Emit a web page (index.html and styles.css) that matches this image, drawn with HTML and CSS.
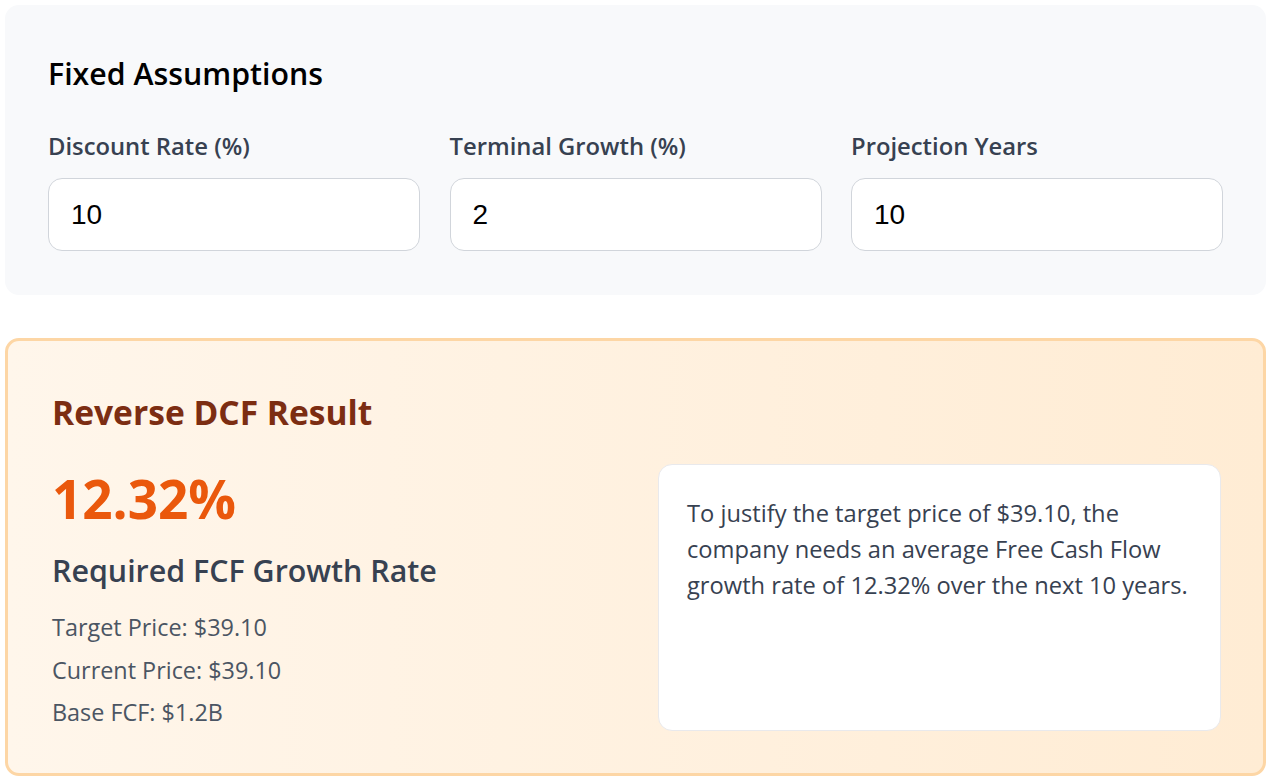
FILE: index.html
```html
<!DOCTYPE html>
<html lang="en">
<head>
<meta charset="utf-8">
<title>Reverse DCF</title>
<link rel="stylesheet" href="styles.css">
</head>
<body>
<div class="page">
  <section class="card assumptions">
    <h2 class="card-title">Fixed Assumptions</h2>
    <div class="fields">
      <label class="field">
        <span class="field-label">Discount Rate (%)</span>
        <input class="field-input" type="text" value="10">
      </label>
      <label class="field">
        <span class="field-label">Terminal Growth (%)</span>
        <input class="field-input" type="text" value="2">
      </label>
      <label class="field">
        <span class="field-label">Projection Years</span>
        <input class="field-input" type="text" value="10">
      </label>
    </div>
  </section>

  <section class="card result">
    <h2 class="result-title">Reverse DCF Result</h2>
    <div class="result-grid">
      <div class="result-main">
        <div class="result-value">12.32%</div>
        <div class="result-caption">Required FCF Growth Rate</div>
        <ul class="result-list">
          <li>Target Price: $39.10</li>
          <li>Current Price: $39.10</li>
          <li>Base FCF: $1.2B</li>
        </ul>
      </div>
      <div class="result-note">
        <p>To justify the target price of $39.10, the company needs an average Free Cash Flow growth rate of 12.32% over the next 10 years.</p>
      </div>
    </div>
  </section>
</div>
</body>
</html>
```

FILE: styles.css
```css
* { box-sizing: border-box; }

html, body {
  margin: 0;
  padding: 0;
  background: #ffffff;
}

body {
  font-family: "Open Sans", "Noto Sans", "Liberation Sans", sans-serif;
  color: #111827;
}

.page {
  padding: 5px 3px 5px 5px;
  display: flex;
  flex-direction: column;
  gap: 43px;
}

.card {
  border-radius: 14px;
}

.assumptions {
  background: #f8f9fb;
  padding: 44px 43px 44px 43px;
}

.card-title {
  margin: 0 0 31px 0;
  font-size: 30.3px;
  line-height: 49px;
  font-weight: 600;
  color: #000000;
}

.fields {
  display: grid;
  grid-template-columns: repeat(3, 1fr);
  gap: 29.5px;
}

.field {
  display: flex;
  flex-direction: column;
}

.field-label {
  font-size: 23.8px;
  line-height: 35px;
  font-weight: 600;
  color: #374151;
  margin-bottom: 14px;
}

.field-input {
  height: 73px;
  width: 100%;
  border: 1.5px solid #d1d5db;
  border-radius: 14px;
  background: #ffffff;
  padding: 0 22px;
  font-family: "Liberation Sans", Arial, sans-serif;
  font-size: 28px;
  color: #000000;
  outline: none;
}

.result {
  border: 3px solid #fdd6a5;
  background: linear-gradient(90deg, #fff6eb 0%, #ffecd4 100%);
  padding: 47px 42px 42px 44px;
}

.result-title {
  margin: 0 0 27px 0;
  font-size: 33.6px;
  line-height: 49px;
  font-weight: 700;
  color: #7c2d12;
}

.result-grid {
  display: grid;
  grid-template-columns: 1fr 1fr;
  gap: 43px;
}

.result-main {
  display: flex;
  flex-direction: column;
}

.result-value {
  font-size: 53px;
  line-height: 70px;
  font-weight: 700;
  color: #ea580c;
}

.result-caption {
  margin-top: 12px;
  font-size: 30.4px;
  line-height: 49px;
  font-weight: 600;
  color: #374151;
}

.result-list {
  list-style: none;
  margin: 15px 0 0 0;
  padding: 0;
  display: flex;
  flex-direction: column;
  gap: 7px;
}

.result-list li {
  font-size: 23.4px;
  line-height: 35.5px;
  color: #4b5563;
}

.result-note {
  background: #ffffff;
  border: 1.5px solid #e9e9ec;
  border-radius: 14px;
  padding: 30px 18px 28px 28px;
}

.result-note p {
  margin: 0;
  font-size: 23.7px;
  line-height: 36px;
  color: #374151;
}
```
